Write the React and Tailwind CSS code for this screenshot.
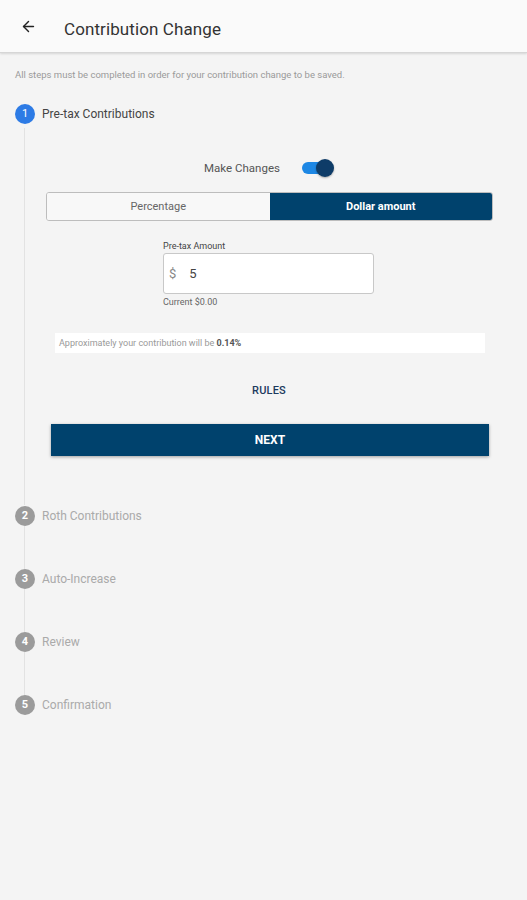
import { ArrowLeft } from 'lucide-react'

const STEPS = [
    { n: 2, label: 'Roth Contributions' },
    { n: 3, label: 'Auto-Increase' },
    { n: 4, label: 'Review' },
    { n: 5, label: 'Confirmation' },
]

export default function App() {
    return (
        <div className="min-h-[900px] w-[527px] bg-[#f4f4f4] font-['Roboto',sans-serif] text-[#333]">
            {/* header */}
            <header className="h-[53px] pt-[8px] flex items-center bg-[#fafafa] border-b border-[#d6d6d6] shadow-[0_1px_2px_rgba(0,0,0,0.12)]">
                <ArrowLeft size={17} strokeWidth={2} className="ml-[20px] mb-[8px] text-[#222]" />
                <h1 className="ml-[27px] text-[17px] text-[#333] tracking-[0.1px]">Contribution Change</h1>
            </header>

            <p className="mt-[15px] ml-[15px] text-[9.5px] text-[#9a9a9a]">
                All steps must be completed in order for your contribution change to be saved.
            </p>

            {/* step 1 */}
            <div className="mt-[22px] ml-[15px] flex items-center gap-[7px]">
                <StepDot n={1} active />
                <span className="text-[12px] text-[#444]">Pre-tax Contributions</span>
            </div>

            <div className="flex">
                <div className="ml-[24px] w-px bg-[#e2e2e2] mt-[4px] h-[377px]" />
                <div className="flex-1 flex flex-col">
                    <div className="mt-[35px] flex items-center justify-center gap-[22px] pr-[14px]">
                        <span className="text-[11.5px] text-[#555]">Make Changes</span>
                        <Toggle />
                    </div>

                    <div className="mt-[15px] ml-[21px] mr-[34px] h-[29px] flex rounded-[3px] overflow-hidden border border-[#bdbdbd]">
                        <div className="flex-1 bg-[#f8f8f8] flex items-center justify-center text-[11px] text-[#666]">Percentage</div>
                        <div className="flex-1 bg-[#00426d] flex items-center justify-center text-[11px] font-bold text-white">Dollar amount</div>
                    </div>

                    <div className="mt-[19px] ml-[138px] w-[211px] flex flex-col">
                        <span className="text-[9px] text-[#444] leading-[12px]">Pre-tax Amount</span>
                        <div className="mt-[1px] h-[41px] bg-white border border-[#c8c8c8] rounded-[3px] flex items-center px-[5px]">
                            <span className="text-[13px] text-[#888]">$</span>
                            <span className="ml-[13px] text-[13px] text-[#444]">5</span>
                        </div>
                        <span className="mt-[2px] text-[9px] text-[#666] leading-[12px]">Current $0.00</span>
                    </div>

                    <div className="mt-[25px] ml-[30px] mr-[42px] h-[20px] bg-white flex items-center px-[4px] text-[9px] text-[#999]">
                        Approximately your contribution will be&nbsp;<b className="text-[#555] font-bold">0.14%</b>
                    </div>

                    <div className="mt-[30px] text-center text-[11px] font-medium text-[#1c3a5e] pr-[14px] tracking-[0.2px]">RULES</div>

                    <button className="mt-[24px] ml-[26px] mr-[38px] h-[32px] bg-[#00426d] text-white text-[12px] font-bold shadow-[0_1px_3px_rgba(0,0,0,0.35)]">
                        NEXT
                    </button>
                </div>
            </div>

            {/* remaining steps */}
            <div className="mt-[1px] ml-[15px] flex flex-col">
                {STEPS.map((s, i) => (
                    <div key={s.n} className="flex flex-col">
                        {i > 0 && <div className="ml-[9px] w-px h-[43px] bg-[#e2e2e2]" />}
                        <div className="flex items-center gap-[7px]">
                            <StepDot n={s.n} />
                            <span className="text-[12px] text-[#aaa]">{s.label}</span>
                        </div>
                    </div>
                ))}
            </div>
        </div>
    )
}

function StepDot({ n, active }) {
    return (
        <div
            className={
                active
                    ? 'w-[20px] h-[20px] rounded-full bg-[#2d7be5] flex items-center justify-center text-[11px] text-white'
                    : 'w-[20px] h-[20px] rounded-full bg-[#9b9b9b] flex items-center justify-center text-[11px] font-bold text-white'
            }
        >
            {n}
        </div>
    )
}

function Toggle() {
    return (
        <div className="relative w-[32px] h-[18px] flex items-center">
            <div className="w-[28px] h-[12px] rounded-full bg-[#1d87e4]" />
            <div className="absolute right-0 top-0 w-[18px] h-[18px] rounded-full bg-[#0e3c68] shadow-[0_1px_2px_rgba(0,0,0,0.3)]" />
        </div>
    )
}
